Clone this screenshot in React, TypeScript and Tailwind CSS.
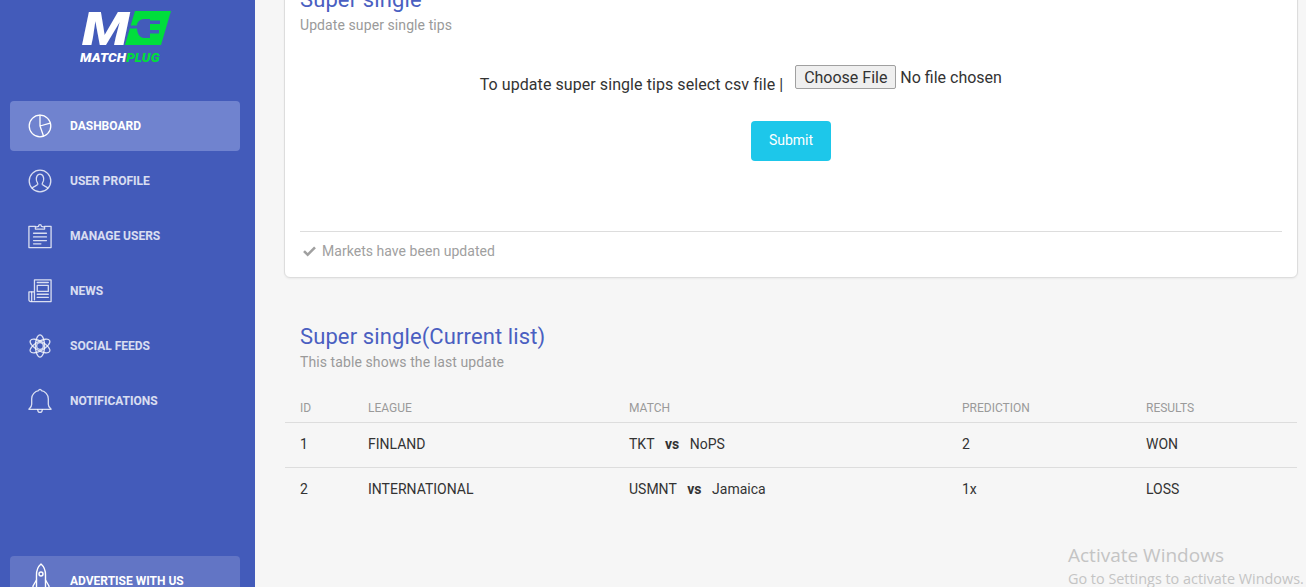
import type { ReactNode } from "react";

const stroke = { fill: "none", stroke: "currentColor", strokeWidth: 1.4, strokeLinejoin: "round", strokeLinecap: "round" } as const;

const icons: Record<string, ReactNode> = {
  dashboard: (
    <svg viewBox="0 0 26 26" className="h-[24px] w-[24px]" {...stroke}>
      <circle cx="13" cy="13" r="11.7" />
      <path d="M13 1.3V13l3.800 10.900M13 13l11-3.200" />
    </svg>
  ),
  user: (
    <svg viewBox="0 0 26 26" className="h-[24px] w-[24px]" {...stroke}>
      <circle cx="13" cy="13" r="11.7" />
      <path d="M4.600 21c.5-2.300 5.200-2.600 6-4.400.4-1-.9-2.200-1.400-4C8.400 9 10 5.500 13 5.500S17.600 9 16.800 12.600c-.5 1.800-1.800 3-1.400 4 .8 1.800 5.500 2.100 6 4.400" />
    </svg>
  ),
  users: (
    <svg viewBox="0 0 26 27" className="h-[26px] w-[24px]" {...stroke}>
      <path d="M8 3H1v23h24V3h-7" />
      <path d="M8 6V4l3.500-1c0-2.500 3-2.500 3 0L18 4v2z" />
      <path d="M6 10.500h14M6 14.500h14M6 18.500h14M6 22h8" />
    </svg>
  ),
  news: (
    <svg viewBox="0 0 26 26" className="h-[24px] w-[24px]" {...stroke}>
      <path d="M7 22.500V1h18v23.500H3a2 2 0 0 1-2-2V14h6" />
      <path d="M4 14v10" />
      <path d="M10 7h12v6.500H10zM10 16.500h12M10 20h12M10 3.800h12" />
    </svg>
  ),
  atom: (
    <svg viewBox="0 0 26 26" className="h-[24px] w-[24px]" {...stroke}>
      <ellipse cx="13" cy="13" rx="5" ry="12" />
      <ellipse cx="13" cy="13" rx="5" ry="12" transform="rotate(60 13 13)" />
      <ellipse cx="13" cy="13" rx="5" ry="12" transform="rotate(120 13 13)" />
      <circle cx="13" cy="13" r="3.600" />
    </svg>
  ),
  bell: (
    <svg viewBox="0 0 26 27" className="h-[26px] w-[24px]" {...stroke}>
      <path d="M1 22.500c0-1 3-2 3-5.500v-6C4 6.500 7.500 3 11.500 2.300 11.800.5 14.200.5 14.500 2.300 18.500 3 22 6.500 22 11v6c0 3.500 3 4.500 3 5.500z" />
      <path d="M10.500 22.800c.3 4 4.700 4 5 0" />
    </svg>
  ),
  rocket: (
    <svg viewBox="0 0 18 36" className="h-[36px] w-[18px]" {...stroke}>
      <path d="M9 1c3.500 3 4.500 7 4.500 11v13h-9V12C4.500 8 5.500 4 9 1z" />
      <circle cx="9" cy="11" r="2" />
      <path d="M4.500 17 1 23v6l3.500-4M13.500 17l3.500 6v6l-3.500-4" />
    </svg>
  ),
};

const nav = [
  { icon: "dashboard", label: "Dashboard", active: true },
  { icon: "user", label: "User Profile" },
  { icon: "users", label: "Manage Users" },
  { icon: "news", label: "News" },
  { icon: "atom", label: "Social Feeds" },
  { icon: "bell", label: "Notifications" },
];

const rows = [
  { id: "1", league: "FINLAND", home: "TKT", away: "NoPS", prediction: "2", result: "WON" },
  { id: "2", league: "INTERNATIONAL", home: "USMNT", away: "Jamaica", prediction: "1x", result: "LOSS" },
];

const cols = "grid grid-cols-[68px_261px_333px_184px_1fr] pl-[15px]";

function Logo() {
  return (
    <div className="relative ml-[70px] h-[62px] w-[90px] shrink-0 italic">
      <span className="absolute left-[2px] top-0 origin-left scale-x-[1.18] text-[47px] font-black leading-[36px] text-white">
        M
      </span>
      <svg viewBox="0 0 46 35" className="absolute left-[45px] top-0 h-[35px] w-[46px]">
        <path d="M10 0h36l-10 34H0z" fill="#00dd3c" />
        <path d="M25 8h-6c-4 0-7 3-7 6.500H5v3h7c0 5 3 9.500 7 9.500h6z" fill="#435bba" />
        <path d="M25 9.500h10V13H25zM25 19h9v3.500h-9z" fill="#435bba" />
      </svg>
      <span className="absolute left-0 top-[40px] origin-left scale-x-[1.08] text-[12.500px] font-black leading-[14px] tracking-[0.1px] text-white">
        MATCH<span className="text-[#00dd3c]">PLUG</span>
      </span>
    </div>
  );
}

export default function App() {
  return (
    <div className="flex h-[587px] w-[1306px] overflow-hidden bg-[#f6f6f6] font-['Roboto',sans-serif] text-[14px] text-[#333333]">
      <aside className="flex w-[255px] shrink-0 flex-col bg-[#435bba] pl-[10px] pr-[15px] pt-[11px] text-white">
        <Logo />
        <nav className="mt-[28px] flex flex-col gap-[5px]">
          {nav.map((item) => (
            <a
              key={item.label}
              className={`flex h-[50px] items-center rounded-[4px] pl-[18px] ${
                item.active ? "bg-[#7083cf] text-white" : "text-white/80"
              }`}
            >
              <span className="flex w-[42px] items-center">{icons[item.icon]}</span>
              <span className="text-[12px] font-bold uppercase">{item.label}</span>
            </a>
          ))}
        </nav>
        <a className="mt-[130px] flex h-[50px] shrink-0 items-center rounded-[4px] bg-[#6275c5] pl-[18px]">
          <span className="flex w-[42px] items-center pl-[4px]">{icons.rocket}</span>
          <span className="text-[12px] font-bold uppercase">Advertise with us</span>
        </a>
      </aside>

      <main className="relative flex-1 overflow-hidden pl-[29px] pr-[8px]">
        <section className="-mt-[16px] rounded-[6px] border border-[#dddddd] bg-white px-[15px] pb-[16px] shadow-[0_1px_2px_rgba(0,0,0,0.05)]">
          <h4 className="text-[22px] leading-[30px] tracking-[0.11px] text-[#4a5fc1]">Super single</h4>
          <p className="text-[14px] leading-[20px] tracking-[0.09px] text-[#9a9a9a]">Update super single tips</p>

          <form className="mt-[30px] flex flex-col items-center">
            <div className="flex items-start text-[16px] leading-[24px]">
              <span className="mt-[8px] tracking-[0.07px]">To update super single tips select csv file |</span>
              <input
                type="file"
                className="ml-[12px] w-[307px] text-[16px] leading-[24px] file:mr-[4px] file:h-[24px] file:w-[101px] file:cursor-pointer file:rounded-[2px] file:border file:border-[#a0a0a0] file:bg-[#efefef] file:px-0 file:text-[16px]"
              />
            </div>
            <button type="button" className="mt-[24px] h-[40px] w-[80px] rounded-[4px] bg-[#1dc7ea] pb-[2px] text-[14px] font-normal text-white">
              Submit
            </button>
          </form>

          <div className="mt-[70px] flex items-center gap-[6px] border-t border-[#dddddd] pl-[3px] pt-[9px] text-[14px] leading-[20px] tracking-[0.04px] text-[#a0a0a0]">
            <svg viewBox="0 0 14 12" className="h-[11px] w-[13px] fill-[#a0a0a0]">
              <path d="M5 11.500 0 6.500l2-2 3 3L12 .5l2 2z" />
            </svg>
            Markets have been updated
          </div>
        </section>

        <section className="mt-[44px]">
          <div className="px-[16px]">
            <h4 className="text-[22px] leading-[30px] tracking-[0.11px] text-[#4a5fc1]">Super single(Current list)</h4>
            <p className="text-[14px] leading-[20px] tracking-[0.09px] text-[#9a9a9a]">This table shows the last update</p>
          </div>
          <div className="mx-[1px] mt-[27px] text-[14px]">
            <div className={`${cols} h-[24px] items-start border-b border-[#dddddd] text-[12px] uppercase text-[#9a9a9a]`}>
              <span>ID</span>
              <span>League</span>
              <span>Match</span>
              <span>Prediction</span>
              <span>Results</span>
            </div>
            {rows.map((row) => (
              <div key={row.id} className={`${cols} h-[45px] items-center border-b border-[#dddddd] pb-[2px] last:border-b-0`}>
                <span>{row.id}</span>
                <span>{row.league}</span>
                <span>
                  {row.home}
                  <b className="mx-[10.500px]">vs</b>
                  {row.away}
                </span>
                <span>{row.prediction}</span>
                <span>{row.result}</span>
              </div>
            ))}
          </div>
        </section>

        <div className="absolute left-[813px] top-[542px] whitespace-nowrap font-['Open_Sans',sans-serif] text-[#c4c4c4]">
          <div className="text-[19px] leading-[27px]">Activate Windows</div>
          <div className="text-[14.400px] leading-[19px]">Go to Settings to activate Windows.</div>
        </div>
      </main>
    </div>
  );
}
